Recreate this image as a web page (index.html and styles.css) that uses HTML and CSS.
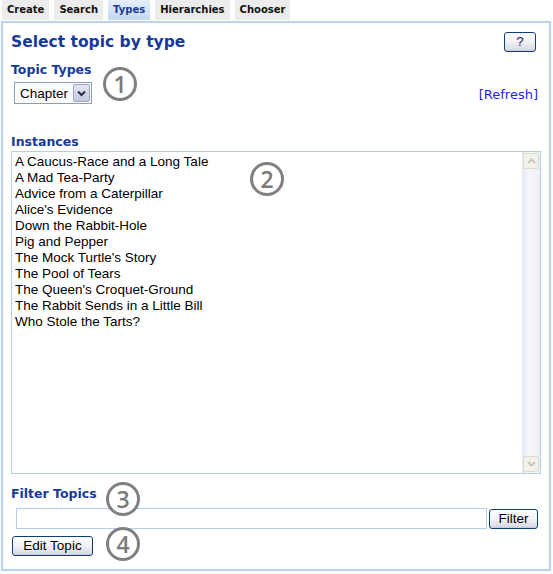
FILE: index.html
```html
<!DOCTYPE html>
<html>
<head>
<meta charset="utf-8">
<link rel="stylesheet" href="styles.css">
</head>
<body>
<div class="tabs">
  <span class="tab">Create</span>
  <span class="tab">Search</span>
  <span class="tab active">Types</span>
  <span class="tab">Hierarchies</span>
  <span class="tab">Chooser</span>
</div>
<div class="panel">
  <div class="header">
    <h1 class="title">Select topic by type</h1>
    <button class="btn help">?</button>
  </div>
  <div class="label label-types">Topic Types</div>
  <div class="type-row">
    <div class="select">
      <span class="select-value">Chapter</span>
      <span class="select-btn">
        <svg width="9" height="7" viewBox="0 0 9 7"><path d="M1 1.5 L4.5 5 L8 1.5" fill="none" stroke="#2b2b4a" stroke-width="2"/></svg>
      </span>
    </div>
    <a class="refresh" href="#">[Refresh]</a>
  </div>
  <div class="label label-instances">Instances</div>
  <div class="listbox">
    <ul class="items">
      <li>A Caucus-Race and a Long Tale</li>
      <li>A Mad Tea-Party</li>
      <li>Advice from a Caterpillar</li>
      <li>Alice's Evidence</li>
      <li>Down the Rabbit-Hole</li>
      <li>Pig and Pepper</li>
      <li>The Mock Turtle's Story</li>
      <li>The Pool of Tears</li>
      <li>The Queen's Croquet-Ground</li>
      <li>The Rabbit Sends in a Little Bill</li>
      <li>Who Stole the Tarts?</li>
    </ul>
    <div class="scrollbar">
      <span class="sb-btn"><svg width="9" height="6" viewBox="0 0 9 6"><path d="M1 5 L4.5 1.5 L8 5" fill="none" stroke="#c9c7bc" stroke-width="2"/></svg></span>
      <span class="sb-btn"><svg width="9" height="6" viewBox="0 0 9 6"><path d="M1 1 L4.5 4.5 L8 1" fill="none" stroke="#c9c7bc" stroke-width="2"/></svg></span>
    </div>
  </div>
  <div class="label label-filter">Filter Topics</div>
  <div class="filter-row">
    <input class="filter-input" type="text">
    <button class="btn filter-btn">Filter</button>
  </div>
  <button class="btn edit-btn">Edit Topic</button>

  <span class="callout c1">1</span>
  <span class="callout c2">2</span>
  <span class="callout c3">3</span>
  <span class="callout c4">4</span>
</div>
</body>
</html>
```
FILE: styles.css
```css
* { box-sizing: border-box; }
body {
  margin: 0;
  background: #fff;
  font-family: "DejaVu Sans", Verdana, sans-serif;
  width: 553px;
  height: 574px;
  overflow: hidden;
}
.tabs {
  display: flex;
  gap: 5px;
  padding-left: 2px;
  height: 20px;
}
.tab {
  display: block;
  height: 20px;
  line-height: 20px;
  padding: 0 5px;
  font-size: 10px;
  font-weight: bold;
  color: #111;
  background: #ececec;
}
.tab.active {
  color: #1c3a94;
  background: linear-gradient(#e6effb, #c3d7f3);
}
.panel {
  position: relative;
  margin: 1px 0 0 1px;
  width: 550px;
  height: 550px;
  border: 2px solid #b9d2f1;
  padding: 9px 8px 0 8px;
}
.header {
  display: flex;
  justify-content: space-between;
  height: 20px;
}
.title {
  margin: 0;
  font-size: 15.5px;
  line-height: 20px;
  font-weight: bold;
  color: #17399a;
}
.btn {
  font-family: "Liberation Sans", Arial, sans-serif;
  font-size: 13.5px;
  color: #000;
  border: 1px solid #0f3f76;
  border-radius: 3px;
  background: linear-gradient(#ffffff 0%, #f4f4f8 45%, #dcdbe8 90%, #c9c8d8 100%);
  padding: 0;
  margin: 0;
  line-height: 18px;
}
.help {
  width: 32px;
  height: 20px;
  margin-right: 5px;
  color: #1a1a6a;
}
.label {
  font-size: 12.5px;
  line-height: 15px;
  font-weight: bold;
  color: #17399a;
}
.label-types { margin-top: 10px; }
.type-row {
  display: flex;
  justify-content: space-between;
  height: 22px;
  margin-top: 5px;
}
.select {
  display: flex;
  align-items: center;
  width: 78px;
  height: 22px;
  margin-left: 3px;
  border: 1px solid #8a9eb8;
  padding: 1px 1px 1px 5px;
  font-family: "Liberation Sans", Arial, sans-serif;
  font-size: 13.5px;
  color: #000;
}
.select-btn {
  margin-left: auto;
  width: 17px;
  height: 18px;
  border: 1px solid #9da5c4;
  border-radius: 2px;
  background: linear-gradient(#e4e6f2, #c3c8e0);
  display: flex;
  align-items: center;
  justify-content: center;
}
.refresh {
  align-self: flex-end;
  margin: 0 3px 2px 0;
  font-size: 13px;
  line-height: 15px;
  color: #1f1fe6;
  text-decoration: none;
}
.label-instances { margin-top: 30px; }
.listbox {
  display: flex;
  margin-top: 2px;
  width: 530px;
  height: 323px;
  border: 1px solid #b6cdee;
}
.items {
  flex: 1;
  list-style: none;
  margin: 0;
  padding: 2px 0 0 3px;
  font-family: "Liberation Sans", Arial, sans-serif;
  font-size: 13.5px;
  line-height: 16px;
  color: #000;
}
.scrollbar {
  width: 18px;
  display: flex;
  flex-direction: column;
  justify-content: space-between;
  padding: 1px;
  background: linear-gradient(90deg, #e6e9f5, #f6f6fa 40%, #efeff6);
}
.sb-btn {
  display: flex;
  align-items: center;
  justify-content: center;
  width: 16px;
  height: 16px;
  border: 1px solid #dedcd0;
  border-radius: 2px;
  background: #f2f1ea;
}
.label-filter { margin-top: 12px; }
.filter-row {
  display: flex;
  align-items: flex-start;
  margin-top: 7px;
}
.filter-input {
  width: 471px;
  height: 21px;
  margin: 0 0 0 5px;
  border: 1px solid #b6cdee;
  padding: 0;
  outline: none;
}
.filter-btn {
  width: 49px;
  height: 20px;
  margin: 1px 0 0 2px;
}
.edit-btn {
  display: block;
  width: 81px;
  height: 20px;
  margin: 7px 0 0 1px;
}
.callout {
  position: absolute;
  width: 34px;
  height: 34px;
  border: 3px solid #808080;
  border-radius: 50%;
  background: rgba(255, 255, 255, 0.85);
  color: #7a7a7a;
  font-family: "Open Sans", "Liberation Sans", sans-serif;
  font-weight: 600;
  font-size: 23px;
  line-height: 28px;
  text-align: center;
}
.c1 { left: 100px; top: 44px; }
.c2 { left: 247px; top: 139px; }
.c3 { left: 103px; top: 459px; }
.c4 { left: 103px; top: 504px; }
```
